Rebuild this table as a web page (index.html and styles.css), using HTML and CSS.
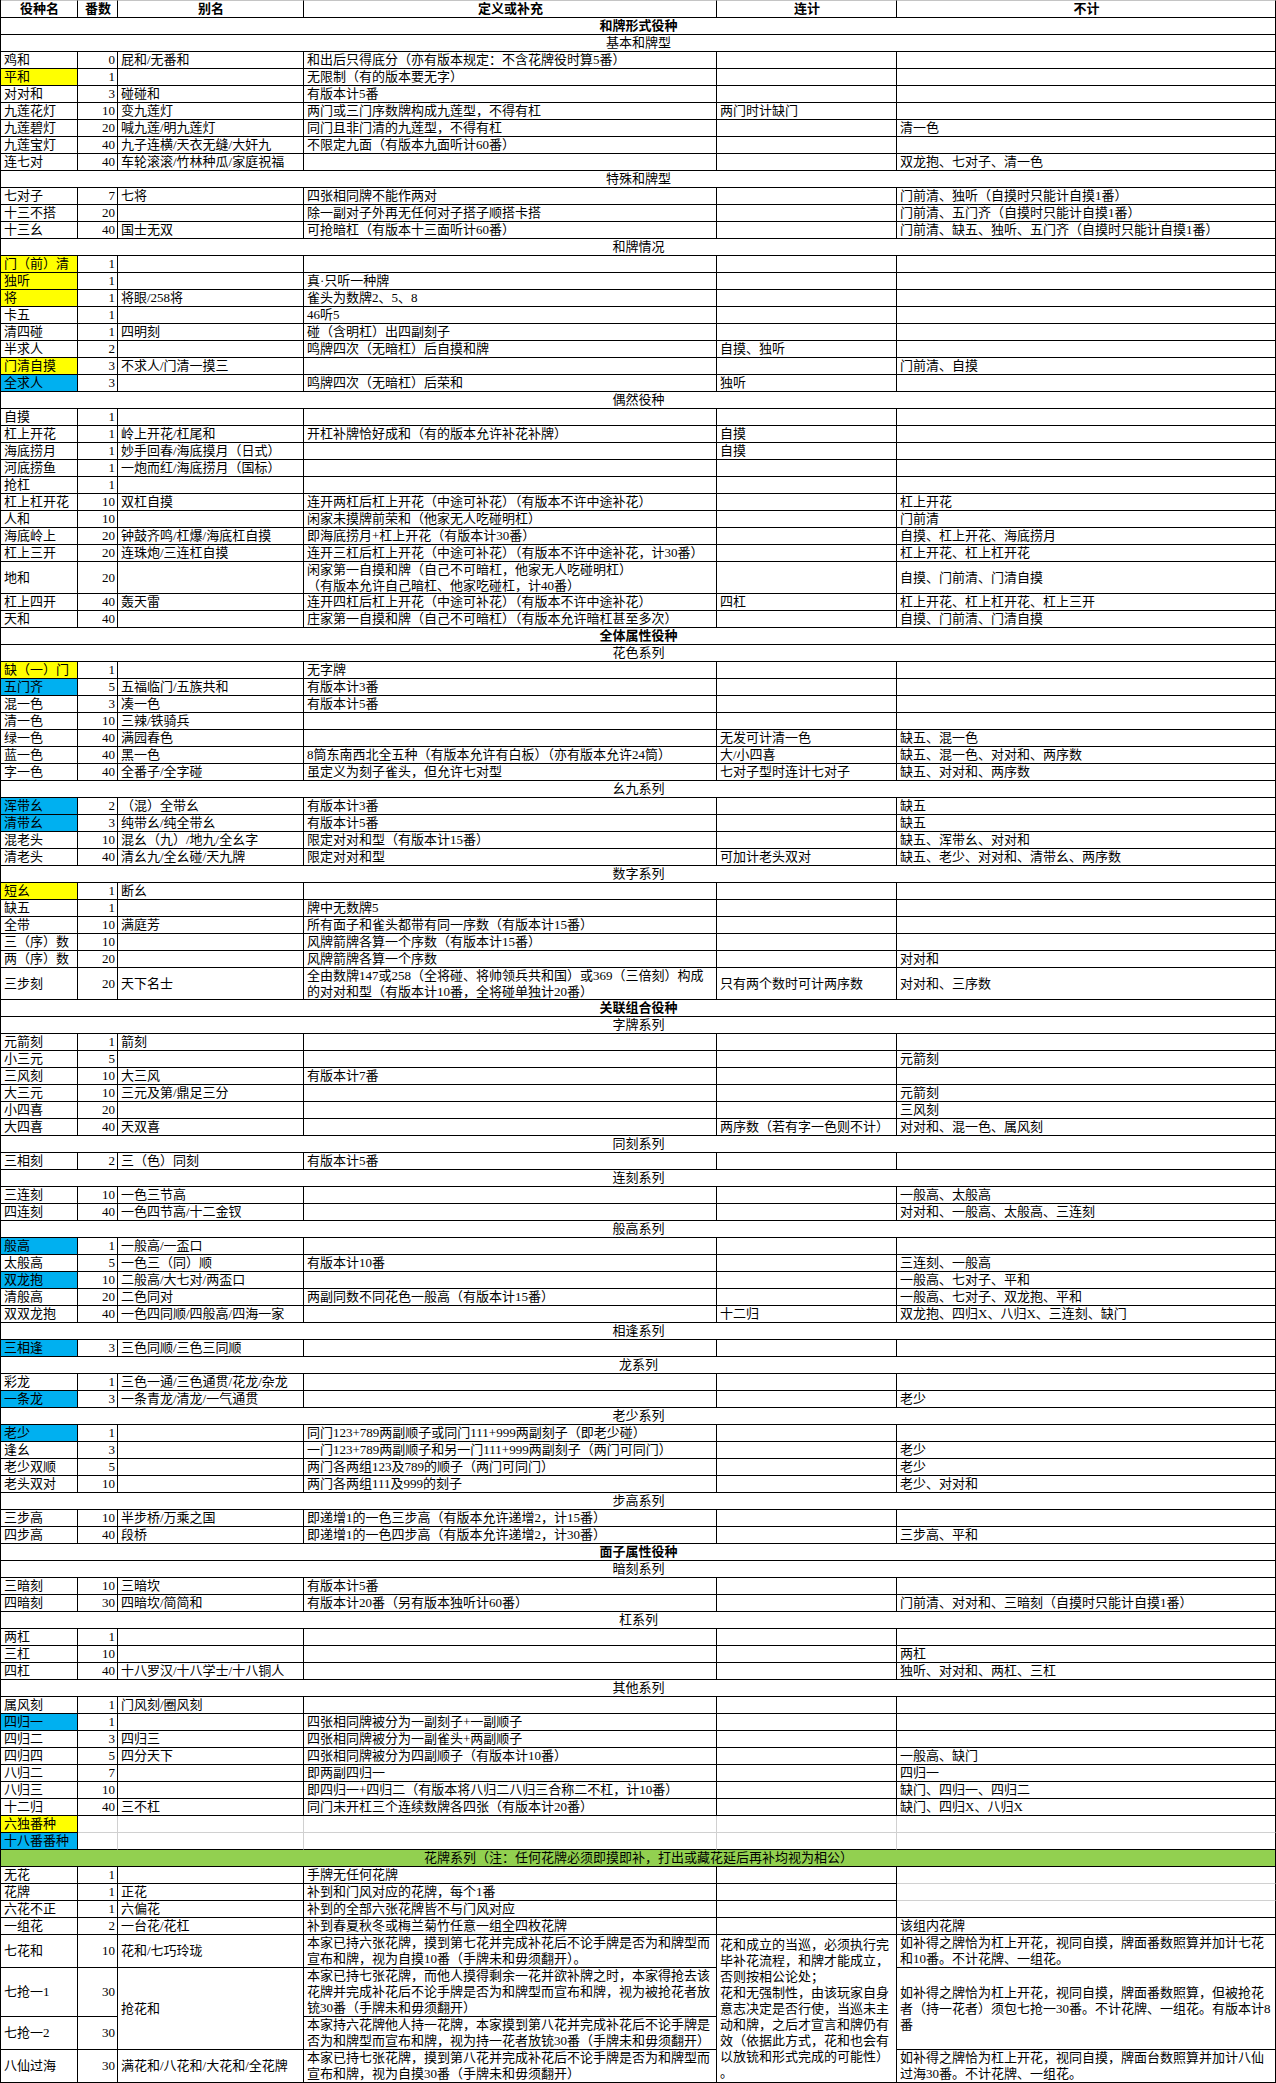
FILE: index.html
```html
<!DOCTYPE html>
<html lang="zh-CN">
<head>
<meta charset="utf-8">
<title>役种表</title>
<link rel="stylesheet" href="styles.css">
</head>
<body>
<table class="sheet">
<colgroup><col class="w1"><col class="w2"><col class="w3"><col class="w4"><col class="w5"><col class="w6"></colgroup>
<tbody>
<tr class="hd"><td>役种名</td><td>番数</td><td>别名</td><td>定义或补充</td><td>连计</td><td>不计</td></tr>
<tr><td class="sec" colspan="6">和牌形式役种</td></tr>
<tr><td class="sub" colspan="6">基本和牌型</td></tr>
<tr><td>鸡和</td><td class="n">0</td><td>屁和/无番和</td><td>和出后只得底分（亦有版本规定：不含花牌役时算5番）</td><td></td><td></td></tr>
<tr><td class="y">平和</td><td class="n">1</td><td></td><td>无限制（有的版本要无字）</td><td></td><td></td></tr>
<tr><td>对对和</td><td class="n">3</td><td>碰碰和</td><td>有版本计5番</td><td></td><td></td></tr>
<tr><td>九莲花灯</td><td class="n">10</td><td>变九莲灯</td><td>两门或三门序数牌构成九莲型，不得有杠</td><td>两门时计缺门</td><td></td></tr>
<tr><td>九莲碧灯</td><td class="n">20</td><td>喊九莲/明九莲灯</td><td>同门且非门清的九莲型，不得有杠</td><td></td><td>清一色</td></tr>
<tr><td>九莲宝灯</td><td class="n">40</td><td>九子连横/天衣无缝/大奸九</td><td>不限定九面（有版本九面听计60番）</td><td></td><td></td></tr>
<tr><td>连七对</td><td class="n">40</td><td>车轮滚滚/竹林种瓜/家庭祝福</td><td></td><td></td><td>双龙抱、七对子、清一色</td></tr>
<tr><td class="sub" colspan="6">特殊和牌型</td></tr>
<tr><td>七对子</td><td class="n">7</td><td>七将</td><td>四张相同牌不能作两对</td><td></td><td>门前清、独听（自摸时只能计自摸1番）</td></tr>
<tr><td>十三不搭</td><td class="n">20</td><td></td><td>除一副对子外再无任何对子搭子顺搭卡搭</td><td></td><td>门前清、五门齐（自摸时只能计自摸1番）</td></tr>
<tr><td>十三幺</td><td class="n">40</td><td>国士无双</td><td>可抢暗杠（有版本十三面听计60番）</td><td></td><td>门前清、缺五、独听、五门齐（自摸时只能计自摸1番）</td></tr>
<tr><td class="sub" colspan="6">和牌情况</td></tr>
<tr><td class="y">门（前）清</td><td class="n">1</td><td></td><td></td><td></td><td></td></tr>
<tr><td class="y">独听</td><td class="n">1</td><td></td><td>真·只听一种牌</td><td></td><td></td></tr>
<tr><td class="y">将</td><td class="n">1</td><td>将眼/258将</td><td>雀头为数牌2、5、8</td><td></td><td></td></tr>
<tr><td>卡五</td><td class="n">1</td><td></td><td>46听5</td><td></td><td></td></tr>
<tr><td>清四碰</td><td class="n">1</td><td>四明刻</td><td>碰（含明杠）出四副刻子</td><td></td><td></td></tr>
<tr><td>半求人</td><td class="n">2</td><td></td><td>鸣牌四次（无暗杠）后自摸和牌</td><td>自摸、独听</td><td></td></tr>
<tr><td class="y">门清自摸</td><td class="n">3</td><td>不求人/门清一摸三</td><td></td><td></td><td>门前清、自摸</td></tr>
<tr><td class="b">全求人</td><td class="n">3</td><td></td><td>鸣牌四次（无暗杠）后荣和</td><td>独听</td><td></td></tr>
<tr><td class="sub" colspan="6">偶然役种</td></tr>
<tr><td>自摸</td><td class="n">1</td><td></td><td></td><td></td><td></td></tr>
<tr><td>杠上开花</td><td class="n">1</td><td>岭上开花/杠尾和</td><td>开杠补牌恰好成和（有的版本允许补花补牌）</td><td>自摸</td><td></td></tr>
<tr><td>海底捞月</td><td class="n">1</td><td>妙手回春/海底摸月（日式）</td><td></td><td>自摸</td><td></td></tr>
<tr><td>河底捞鱼</td><td class="n">1</td><td>一炮而红/海底捞月（国标）</td><td></td><td></td><td></td></tr>
<tr><td>抢杠</td><td class="n">1</td><td></td><td></td><td></td><td></td></tr>
<tr><td>杠上杠开花</td><td class="n">10</td><td>双杠自摸</td><td>连开两杠后杠上开花（中途可补花）（有版本不许中途补花）</td><td></td><td>杠上开花</td></tr>
<tr><td>人和</td><td class="n">10</td><td></td><td>闲家未摸牌前荣和（他家无人吃碰明杠）</td><td></td><td>门前清</td></tr>
<tr><td>海底岭上</td><td class="n">20</td><td>钟鼓齐鸣/杠爆/海底杠自摸</td><td>即海底捞月+杠上开花（有版本计30番）</td><td></td><td>自摸、杠上开花、海底捞月</td></tr>
<tr><td>杠上三开</td><td class="n">20</td><td>连珠炮/三连杠自摸</td><td>连开三杠后杠上开花（中途可补花）（有版本不许中途补花，计30番）</td><td></td><td>杠上开花、杠上杠开花</td></tr>
<tr class="h2"><td>地和</td><td class="n">20</td><td></td><td>闲家第一自摸和牌（自己不可暗杠，他家无人吃碰明杠）<br>（有版本允许自己暗杠、他家吃碰杠，计40番）</td><td></td><td>自摸、门前清、门清自摸</td></tr>
<tr><td>杠上四开</td><td class="n">40</td><td>轰天雷</td><td>连开四杠后杠上开花（中途可补花）（有版本不许中途补花）</td><td>四杠</td><td>杠上开花、杠上杠开花、杠上三开</td></tr>
<tr><td>天和</td><td class="n">40</td><td></td><td>庄家第一自摸和牌（自己不可暗杠）（有版本允许暗杠甚至多次）</td><td></td><td>自摸、门前清、门清自摸</td></tr>
<tr><td class="sec" colspan="6">全体属性役种</td></tr>
<tr><td class="sub" colspan="6">花色系列</td></tr>
<tr><td class="y">缺（一）门</td><td class="n">1</td><td></td><td>无字牌</td><td></td><td></td></tr>
<tr><td class="b">五门齐</td><td class="n">5</td><td>五福临门/五族共和</td><td>有版本计3番</td><td></td><td></td></tr>
<tr><td>混一色</td><td class="n">3</td><td>凑一色</td><td>有版本计5番</td><td></td><td></td></tr>
<tr><td>清一色</td><td class="n">10</td><td>三辣/铁骑兵</td><td></td><td></td><td></td></tr>
<tr><td>绿一色</td><td class="n">40</td><td>满园春色</td><td></td><td>无发可计清一色</td><td>缺五、混一色</td></tr>
<tr><td>蓝一色</td><td class="n">40</td><td>黑一色</td><td>8筒东南西北全五种（有版本允许有白板）（亦有版本允许24筒）</td><td>大/小四喜</td><td>缺五、混一色、对对和、两序数</td></tr>
<tr><td>字一色</td><td class="n">40</td><td>全番子/全字碰</td><td>虽定义为刻子雀头，但允许七对型</td><td>七对子型时连计七对子</td><td>缺五、对对和、两序数</td></tr>
<tr><td class="sub" colspan="6">幺九系列</td></tr>
<tr><td class="b">浑带幺</td><td class="n">2</td><td>（混）全带幺</td><td>有版本计3番</td><td></td><td>缺五</td></tr>
<tr><td class="b">清带幺</td><td class="n">3</td><td>纯带幺/纯全带幺</td><td>有版本计5番</td><td></td><td>缺五</td></tr>
<tr><td>混老头</td><td class="n">10</td><td>混幺（九）/地九/全幺字</td><td>限定对对和型（有版本计15番）</td><td></td><td>缺五、浑带幺、对对和</td></tr>
<tr><td>清老头</td><td class="n">40</td><td>清幺九/全幺碰/天九牌</td><td>限定对对和型</td><td>可加计老头双对</td><td>缺五、老少、对对和、清带幺、两序数</td></tr>
<tr><td class="sub" colspan="6">数字系列</td></tr>
<tr><td class="y">短幺</td><td class="n">1</td><td>断幺</td><td></td><td></td><td></td></tr>
<tr><td>缺五</td><td class="n">1</td><td></td><td>牌中无数牌5</td><td></td><td></td></tr>
<tr><td>全带</td><td class="n">10</td><td>满庭芳</td><td>所有面子和雀头都带有同一序数（有版本计15番）</td><td></td><td></td></tr>
<tr><td>三（序）数</td><td class="n">10</td><td></td><td>风牌箭牌各算一个序数（有版本计15番）</td><td></td><td></td></tr>
<tr><td>两（序）数</td><td class="n">20</td><td></td><td>风牌箭牌各算一个序数</td><td></td><td>对对和</td></tr>
<tr class="h2"><td>三步刻</td><td class="n">20</td><td>天下名士</td><td>全由数牌147或258（全将碰、将帅领兵共和国）或369（三倍刻）构成<br>的对对和型（有版本计10番，全将碰单独计20番）</td><td>只有两个数时可计两序数</td><td>对对和、三序数</td></tr>
<tr><td class="sec" colspan="6">关联组合役种</td></tr>
<tr><td class="sub" colspan="6">字牌系列</td></tr>
<tr><td>元箭刻</td><td class="n">1</td><td>箭刻</td><td></td><td></td><td></td></tr>
<tr><td>小三元</td><td class="n">5</td><td></td><td></td><td></td><td>元箭刻</td></tr>
<tr><td>三风刻</td><td class="n">10</td><td>大三风</td><td>有版本计7番</td><td></td><td></td></tr>
<tr><td>大三元</td><td class="n">10</td><td>三元及第/鼎足三分</td><td></td><td></td><td>元箭刻</td></tr>
<tr><td>小四喜</td><td class="n">20</td><td></td><td></td><td></td><td>三风刻</td></tr>
<tr><td>大四喜</td><td class="n">40</td><td>天双喜</td><td></td><td>两序数（若有字一色则不计）</td><td>对对和、混一色、属风刻</td></tr>
<tr><td class="sub" colspan="6">同刻系列</td></tr>
<tr><td>三相刻</td><td class="n">2</td><td>三（色）同刻</td><td>有版本计5番</td><td></td><td></td></tr>
<tr><td class="sub" colspan="6">连刻系列</td></tr>
<tr><td>三连刻</td><td class="n">10</td><td>一色三节高</td><td></td><td></td><td>一般高、太般高</td></tr>
<tr><td>四连刻</td><td class="n">40</td><td>一色四节高/十二金钗</td><td></td><td></td><td>对对和、一般高、太般高、三连刻</td></tr>
<tr><td class="sub" colspan="6">般高系列</td></tr>
<tr><td class="b">般高</td><td class="n">1</td><td>一般高/一盃口</td><td></td><td></td><td></td></tr>
<tr><td>太般高</td><td class="n">5</td><td>一色三（同）顺</td><td>有版本计10番</td><td></td><td>三连刻、一般高</td></tr>
<tr><td class="b">双龙抱</td><td class="n">10</td><td>二般高/大七对/两盃口</td><td></td><td></td><td>一般高、七对子、平和</td></tr>
<tr><td>清般高</td><td class="n">20</td><td>二色同对</td><td>两副同数不同花色一般高（有版本计15番）</td><td></td><td>一般高、七对子、双龙抱、平和</td></tr>
<tr><td>双双龙抱</td><td class="n">40</td><td>一色四同顺/四般高/四海一家</td><td></td><td>十二归</td><td>双龙抱、四归X、八归X、三连刻、缺门</td></tr>
<tr><td class="sub" colspan="6">相逢系列</td></tr>
<tr><td class="b">三相逢</td><td class="n">3</td><td>三色同顺/三色三同顺</td><td></td><td></td><td></td></tr>
<tr><td class="sub" colspan="6">龙系列</td></tr>
<tr><td>彩龙</td><td class="n">1</td><td>三色一通/三色通贯/花龙/杂龙</td><td></td><td></td><td></td></tr>
<tr><td class="b">一条龙</td><td class="n">3</td><td>一条青龙/清龙/一气通贯</td><td></td><td></td><td>老少</td></tr>
<tr><td class="sub" colspan="6">老少系列</td></tr>
<tr><td class="b">老少</td><td class="n">1</td><td></td><td>同门123+789两副顺子或同门111+999两副刻子（即老少碰）</td><td></td><td></td></tr>
<tr><td>逢幺</td><td class="n">3</td><td></td><td>一门123+789两副顺子和另一门111+999两副刻子（两门可同门）</td><td></td><td>老少</td></tr>
<tr><td>老少双顺</td><td class="n">5</td><td></td><td>两门各两组123及789的顺子（两门可同门）</td><td></td><td>老少</td></tr>
<tr><td>老头双对</td><td class="n">10</td><td></td><td>两门各两组111及999的刻子</td><td></td><td>老少、对对和</td></tr>
<tr><td class="sub" colspan="6">步高系列</td></tr>
<tr><td>三步高</td><td class="n">10</td><td>半步桥/万乘之国</td><td>即递增1的一色三步高（有版本允许递增2，计15番）</td><td></td><td></td></tr>
<tr><td>四步高</td><td class="n">40</td><td>段桥</td><td>即递增1的一色四步高（有版本允许递增2，计30番）</td><td></td><td>三步高、平和</td></tr>
<tr><td class="sec" colspan="6">面子属性役种</td></tr>
<tr><td class="sub" colspan="6">暗刻系列</td></tr>
<tr><td>三暗刻</td><td class="n">10</td><td>三暗坎</td><td>有版本计5番</td><td></td><td></td></tr>
<tr><td>四暗刻</td><td class="n">30</td><td>四暗坎/简简和</td><td>有版本计20番（另有版本独听计60番）</td><td></td><td>门前清、对对和、三暗刻（自摸时只能计自摸1番）</td></tr>
<tr><td class="sub" colspan="6">杠系列</td></tr>
<tr><td>两杠</td><td class="n">1</td><td></td><td></td><td></td><td></td></tr>
<tr><td>三杠</td><td class="n">10</td><td></td><td></td><td></td><td>两杠</td></tr>
<tr><td>四杠</td><td class="n">40</td><td>十八罗汉/十八学士/十八铜人</td><td></td><td></td><td>独听、对对和、两杠、三杠</td></tr>
<tr><td class="sub" colspan="6">其他系列</td></tr>
<tr><td>属风刻</td><td class="n">1</td><td>门风刻/圈风刻</td><td></td><td></td><td></td></tr>
<tr><td class="b">四归一</td><td class="n">1</td><td></td><td>四张相同牌被分为一副刻子+一副顺子</td><td></td><td></td></tr>
<tr><td>四归二</td><td class="n">3</td><td>四归三</td><td>四张相同牌被分为一副雀头+两副顺子</td><td></td><td></td></tr>
<tr><td>四归四</td><td class="n">5</td><td>四分天下</td><td>四张相同牌被分为四副顺子（有版本计10番）</td><td></td><td>一般高、缺门</td></tr>
<tr><td>八归二</td><td class="n">7</td><td></td><td>即两副四归一</td><td></td><td>四归一</td></tr>
<tr><td>八归三</td><td class="n">10</td><td></td><td>即四归一+四归二（有版本将八归二八归三合称二不杠，计10番）</td><td></td><td>缺门、四归一、四归二</td></tr>
<tr><td>十二归</td><td class="n">40</td><td>三不杠</td><td>同门未开杠三个连续数牌各四张（有版本计20番）</td><td></td><td>缺门、四归X、八归X</td></tr>
<tr><td class="y">六独番种</td><td class="gr gb"></td><td class="gr gb"></td><td class="gr gb"></td><td class="gr gb"></td><td class="gb"></td></tr>
<tr><td class="b">十八番番种</td><td class="gr"></td><td class="gr"></td><td class="gr"></td><td class="gr"></td><td></td></tr>
<tr><td class="green" colspan="6">花牌系列（注：任何花牌必须即摸即补，打出或藏花延后再补均视为相公）</td></tr>
<tr><td>无花</td><td class="n">1</td><td></td><td>手牌无任何花牌</td><td></td><td class="gb"></td></tr>
<tr><td>花牌</td><td class="n">1</td><td>正花</td><td>补到和门风对应的花牌，每个1番</td><td></td><td class="gb"></td></tr>
<tr><td>六花不正</td><td class="n">1</td><td>六偏花</td><td>补到的全部六张花牌皆不与门风对应</td><td></td><td></td></tr>
<tr><td>一组花</td><td class="n">2</td><td>一台花/花杠</td><td>补到春夏秋冬或梅兰菊竹任意一组全四枚花牌</td><td></td><td>该组内花牌</td></tr>
<tr class="f2"><td>七花和</td><td class="n">10</td><td>花和/七巧玲珑</td><td>本家已持六张花牌，摸到第七花并完成补花后不论手牌是否为和牌型而<br>宣布和牌，视为自摸10番（手牌未和毋须翻开）。</td><td rowspan="4">花和成立的当巡，必须执行完<br>毕补花流程，和牌才能成立，<br>否则按相公论处；<br>花和无强制性，由该玩家自身<br>意志决定是否行使，当巡未主<br>动和牌，之后才宣言和牌仍有<br>效（依据此方式，花和也会有<br>以放铳和形式完成的可能性）<br>。</td><td>如补得之牌恰为杠上开花，视同自摸，牌面番数照算并加计七花<br>和10番。不计花牌、一组花。</td></tr>
<tr class="f3"><td>七抢一1</td><td class="n">30</td><td rowspan="2">抢花和</td><td>本家已持七张花牌，而他人摸得剩余一花并欲补牌之时，本家得抢去该<br>花牌并完成补花后不论手牌是否为和牌型而宣布和牌，视为被抢花者放<br>铳30番（手牌未和毋须翻开）</td><td rowspan="2">如补得之牌恰为杠上开花，视同自摸，牌面番数照算，但被抢花<br>者（持一花者）须包七抢一30番。不计花牌、一组花。有版本计8<br>番</td></tr>
<tr class="f2"><td>七抢一2</td><td class="n">30</td><td>本家持六花牌他人持一花牌，本家摸到第八花并完成补花后不论手牌是<br>否为和牌型而宣布和牌，视为持一花者放铳30番（手牌未和毋须翻开）</td></tr>
<tr class="f2"><td>八仙过海</td><td class="n">30</td><td>满花和/八花和/大花和/全花牌</td><td>本家已持七张花牌，摸到第八花并完成补花后不论手牌是否为和牌型而<br>宣布和牌，视为自摸30番（手牌未和毋须翻开）</td><td>如补得之牌恰为杠上开花，视同自摸，牌面台数照算并加计八仙<br>过海30番。不计花牌、一组花。</td></tr>
</tbody>
</table>
</body>
</html>
```

FILE: styles.css
```css
html, body {
  margin: 0;
  padding: 0;
  background: #ffffff;
}

.sheet {
  border-collapse: separate;
  border-spacing: 0;
  table-layout: fixed;
  width: 1276px;
  border-left: 1px solid #000;
  font-family: "Liberation Serif", "Noto Sans CJK SC", serif;
  font-size: 13px;
  color: #000;
}

.w1 { width: 77px; }
.w2 { width: 40px; }
.w3 { width: 186px; }
.w4 { width: 413px; }
.w5 { width: 180px; }
.w6 { width: 379px; }

.sheet td {
  border-right: 1px solid #000;
  border-bottom: 1px solid #000;
  padding: 0 2px 0 3px;
  line-height: 16px;
  white-space: nowrap;
  overflow: hidden;
  vertical-align: middle;
  text-align: left;
}

.sheet .hd td {
  border-top: 1px solid #c4c4c4;
  font-weight: bold;
  text-align: center;
}

.sheet td.n { text-align: right; }

.sheet td.sec {
  font-weight: bold;
  text-align: center;
}

.sheet td.sub { text-align: center; }

.sheet td.green {
  background: #92d050;
  text-align: center;
}

.sheet td.y { background: #ffff00; }
.sheet td.b { background: #00b0f0; }

.sheet td.gr { border-right-color: #d0d0d0; }
.sheet td.gb { border-bottom-color: #d0d0d0; }

.sheet .h2 td { line-height: 15.5px; }
```
